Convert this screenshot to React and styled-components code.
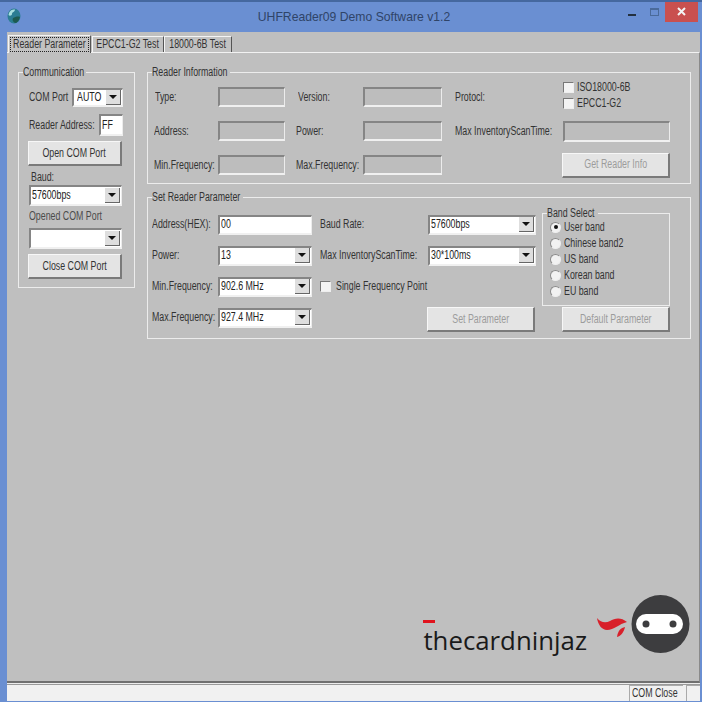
import React from 'react';
import styled, { createGlobalStyle } from 'styled-components';

const GlobalStyle = createGlobalStyle`
  html, body {
    margin: 0;
    padding: 0;
    background: #fff;
  }
  * {
    box-sizing: border-box;
  }
`;

const Window = styled.div`
  width: 702px;
  height: 702px;
  position: relative;
  display: flex;
  flex-direction: column;
  background: #6a8fd2;
  padding: 0 2px 1px 7px;
  border-top: 2px solid #45689f;
  font-family: "Liberation Sans", Arial, sans-serif;
  font-size: 12px;
  color: #333;
  overflow: hidden;
`;

const TitleBar = styled.div`
  height: 30px;
  position: relative;
  display: flex;
  align-items: center;
  justify-content: center;
  flex: none;
  font-size: 12.2px;
  color: #2f4468;
  margin: 0 -2px 0 -7px;
  padding-left: 6px;
`;

const AppIcon = styled.svg`
  position: absolute;
  left: 7px;
  top: 6px;
  width: 14px;
  height: 16px;
`;

const WinButtons = styled.div`
  position: absolute;
  right: 4px;
  top: -1px;
  display: flex;
  align-items: flex-start;
`;

const WinButton = styled.div`
  width: ${(p) => p.$w}px;
  height: 21px;
  display: flex;
  align-items: center;
  justify-content: center;
  background: ${(p) => p.$bg || 'transparent'};
`;

const Client = styled.div`
  flex: 1;
  min-height: 0;
  display: flex;
  flex-direction: column;
  background: #ededed;
`;

/* the old dialog font is much narrower than Arial, so squeeze the text */
const Text = styled.span`
  display: inline-block;
  flex: none;
  white-space: nowrap;
  line-height: 13px;
  transform: scaleX(0.735);
  transform-origin: ${(p) => (p.$center ? 'center' : 'left')} center;
  margin-left: ${(p) => p.$indent || 0}px;
  color: ${(p) => p.$color || 'inherit'};
`;

const RowLabel = styled(Text)`
  flex: 1;
  width: 0;
`;

const TabStrip = styled.div`
  height: 20px;
  flex: none;
  display: flex;
  align-items: flex-end;
  padding-left: 1px;
  background: #bfbfbf;
`;

const Tab = styled.div`
  height: ${(p) => (p.$active ? 18 : 16)}px;
  width: ${(p) => p.$w}px;
  flex: none;
  display: flex;
  align-items: center;
  justify-content: center;
  background: #c2c2c2;
  border-top: 1px solid #f4f4f4;
  border-left: 1px solid #f4f4f4;
  border-right: 1px solid #555;
  margin-bottom: ${(p) => (p.$active ? -1 : 0)}px;
  margin-right: ${(p) => (p.$active ? 1 : 0)}px;
  position: relative;
  z-index: ${(p) => (p.$active ? 1 : 0)};
`;

const TabFocus = styled.div`
  width: 79px;
  height: 15px;
  display: flex;
  align-items: center;
  justify-content: center;
  border: 1px dotted #222;
`;

const TabPanel = styled.div`
  flex: 1;
  min-height: 0;
  display: grid;
  grid-template-columns: 117px 544px;
  grid-template-rows: 117px 147px;
  column-gap: 12px;
  row-gap: 8px;
  align-content: start;
  padding: 14px 0 0 11px;
  background: #bfbfbf;
  border-top: 1px solid #f2f2f2;
  border-right: 1px solid #8a8a8a;
  border-bottom: 2px solid #707070;
`;

const Group = styled.fieldset`
  margin: 0;
  min-width: 0;
  border: 1px solid #ececec;
  padding: 0;
  display: block;
`;

const CommGroup = styled(Group)`
  grid-row: 1 / 3;
  align-self: start;
  height: 221px;
`;

const Legend = styled.legend`
  padding: 0;
  margin-left: 4px;
  width: ${(p) => p.$w}px;
  height: 10px;
  display: flex;
  align-items: center;
  background: #bfbfbf;
  color: #333;
`;

const CommBody = styled.div`
  display: flex;
  flex-direction: column;
  padding: 11px 11px 0 10px;
`;

const CommRow = styled.div`
  display: flex;
  align-items: center;
  justify-content: space-between;
  margin-bottom: ${(p) => p.$mb || 0}px;
`;

const Field = styled.div`
  width: ${(p) => p.$w}px;
  height: ${(p) => p.$h || 20}px;
  flex: none;
  display: flex;
  align-items: center;
  justify-content: space-between;
  overflow: hidden;
  background: ${(p) => (p.$disabled ? '#bdbdbd' : '#fff')};
  border-style: solid;
  border-width: 2px 1px 2px 2px;
  border-color: #858585 #ececec #f0f0f0 #858585;
  padding: 0 1px 0 ${(p) => p.$pad || 1}px;
  color: #222;
`;

const FieldValue = styled.div`
  flex: 1;
  min-width: 0;
  display: flex;
  align-items: center;
`;

const DropArrow = styled.span`
  width: 15px;
  height: 15px;
  flex: none;
  display: flex;
  align-items: center;
  justify-content: center;
  background: #dedede;
  border-right: 1px solid #666;
  border-bottom: 1px solid #666;
  &::after {
    content: '';
    border-left: 4px solid transparent;
    border-right: 4px solid transparent;
    border-top: 4px solid #111;
  }
`;

const PushButton = styled.div`
  width: ${(p) => p.$w}px;
  height: 25px;
  flex: none;
  display: flex;
  align-items: center;
  justify-content: center;
  background: #e4e4e4;
  border-style: solid;
  border-width: 1px 2px 2px 1px;
  border-color: #f7f7f7 #7a7a7a #7a7a7a #f7f7f7;
  margin-left: ${(p) => p.$offset || 0}px;
  color: ${(p) => (p.disabled ? '#9c9c9c' : '#333')};
`;

const InfoGrid = styled.div`
  display: grid;
  grid-template-columns: 64px 67px 11px 67px 79px 13px 108px 107px;
  grid-auto-rows: 34px;
  align-items: center;
  padding: 3px 0 0 6px;
`;

const Spacer = styled.span``;

const CheckStack = styled.div`
  display: flex;
  flex-direction: column;
  gap: 1px;
  align-self: start;
`;

const CheckRow = styled.div`
  display: flex;
  align-items: center;
  gap: 3px;
  height: 15px;
`;

const CheckBox = styled.span`
  width: 11px;
  height: 11px;
  flex: none;
  background: #f3f3f3;
  border-style: solid;
  border-width: 1px;
  border-color: #777 #eee #eee #777;
`;

const InfoButton = styled.div`
  margin-left: -1px;
`;

const ParamBody = styled.div`
  display: grid;
  grid-template-columns: 172px 1fr;
`;

const ParamLeft = styled.div`
  display: grid;
  grid-template-columns: 66px 95px;
  grid-auto-rows: 31px;
  align-items: center;
  padding: 7px 0 0 4px;
`;

const ParamRight = styled.div`
  display: grid;
  grid-template-columns: 108px 108px 6px 128px;
  grid-template-rows: repeat(4, 31px);
  align-items: center;
  padding-top: 7px;
`;

const SingleCheck = styled(CheckRow)`
  grid-column: 1 / 3;
  gap: 5px;
`;

const ParamButtonCell = styled.div`
  grid-column: 2;
  grid-row: 4;
  align-self: end;
  margin-bottom: 1px;
`;

const BandCell = styled.div`
  grid-column: 4;
  grid-row: 1 / 4;
  align-self: start;
  margin-top: -1px;
`;

const DefaultCell = styled.div`
  grid-column: 4;
  grid-row: 4;
  align-self: end;
  margin: 0 0 1px 20px;
`;

const BandGroup = styled(Group)`
  height: 98px;
`;

const BandList = styled.div`
  display: flex;
  flex-direction: column;
  padding: 1px 0 0 7px;
`;

const BandRow = styled.div`
  height: 16.2px;
  display: flex;
  align-items: center;
  gap: 3px;
`;

const Radio = styled.span`
  width: 11px;
  height: 11px;
  flex: none;
  border-radius: 50%;
  background: #f2f2f2;
  border: 1px solid #8b8b8b;
  border-right-color: #eee;
  border-bottom-color: #eee;
  display: flex;
  align-items: center;
  justify-content: center;
  &::after {
    content: '';
    width: 4px;
    height: 4px;
    border-radius: 50%;
    background: ${(p) => (p.$on ? '#111' : 'transparent')};
  }
`;

const Brand = styled.div`
  display: flex;
  align-items: flex-start;
  position: absolute;
  right: 11px;
  top: 592px;
  gap: 10px;
`;

const BrandName = styled.div`
  position: relative;
  font-family: "Open Sans", "DejaVu Sans", sans-serif;
  font-size: 25.8px;
  line-height: 32px;
  color: #1a1a1a;
  margin-top: 30px;
  &::before {
    content: '';
    position: absolute;
    left: 0;
    top: -4px;
    width: 12px;
    height: 3px;
    background: #e0141e;
  }
`;

const Logo = styled.svg`
  width: 94px;
  height: 60px;
  display: block;
`;

const StatusBar = styled.div`
  height: 17px;
  flex: none;
  margin-top: 1px;
  display: flex;
  justify-content: flex-end;
  background: #f1f1f1;
  border-top: 1px solid #9a9a9a;
`;

const StatusCell = styled.div`
  width: ${(p) => p.$w}px;
  display: flex;
  align-items: center;
  padding-left: 2px;
  color: #333;
  border-left: 1px solid #aaa;
  border-top: 1px solid #aaa;
  margin-left: 3px;
`;

function Combo({ w, value, h, pad }) {
  return (
    <Field $w={w} $h={h} $pad={pad}>
      <FieldValue><Text>{value}</Text></FieldValue>
      <DropArrow />
    </Field>
  );
}

function Communication() {
  return (
    <CommGroup>
      <Legend $w={63}><Text>Communication</Text></Legend>
      <CommBody>
        <CommRow $mb={7}>
          <RowLabel>COM Port</RowLabel>
          <Combo w={51} h={19} pad={3} value="AUTO" />
        </CommRow>
        <CommRow $mb={5}>
          <RowLabel>Reader Address:</RowLabel>
          <Field $w={24} $h={22}><Text>FF</Text></Field>
        </CommRow>
        <CommRow $mb={5}>
          <PushButton $w={94} $offset={-1}><Text $center>Open COM Port</Text></PushButton>
        </CommRow>
        <CommRow $mb={1}>
          <Text $indent={2}>Baud:</Text>
        </CommRow>
        <CommRow $mb={4}>
          <Combo w={93} h={21} value="57600bps" />
        </CommRow>
        <CommRow $mb={5}>
          <Text $color="#4b4b4b">Opened COM Port</Text>
        </CommRow>
        <CommRow $mb={5}>
          <Combo w={93} h={21} value="" />
        </CommRow>
        <CommRow>
          <PushButton $w={94} $offset={-1}><Text $center>Close COM Port</Text></PushButton>
        </CommRow>
      </CommBody>
    </CommGroup>
  );
}

function ReaderInfo() {
  return (
    <Group>
      <Legend $w={78}><Text>Reader Information</Text></Legend>
      <InfoGrid>
        <Text $indent={1}>Type:</Text>
        <Field $w={67} $disabled />
        <Spacer />
        <Text $indent={2}>Version:</Text>
        <Field $w={79} $disabled />
        <Spacer />
        <Text>Protocl:</Text>
        <CheckStack>
          <CheckRow><CheckBox /><Text>ISO18000-6B</Text></CheckRow>
          <CheckRow><CheckBox /><Text>EPCC1-G2</Text></CheckRow>
        </CheckStack>

        <Text>Address:</Text>
        <Field $w={67} $disabled />
        <Spacer />
        <Text>Power:</Text>
        <Field $w={79} $disabled />
        <Spacer />
        <Text>Max InventoryScanTime:</Text>
        <Field $w={107} $h={21} $disabled />

        <Text>Min.Frequency:</Text>
        <Field $w={67} $disabled />
        <Spacer />
        <Text>Max.Frequency:</Text>
        <Field $w={79} $disabled />
        <Spacer />
        <Spacer />
        <InfoButton>
          <PushButton $w={108} disabled><Text $center>Get Reader Info</Text></PushButton>
        </InfoButton>
      </InfoGrid>
    </Group>
  );
}

function SetParameter() {
  const bands = ['User band', 'Chinese band2', 'US band', 'Korean band', 'EU band'];
  return (
    <Group>
      <Legend $w={91}><Text>Set Reader Parameter</Text></Legend>
      <ParamBody>
        <ParamLeft>
          <Text>Address(HEX):</Text>
          <Field $w={94}><Text>00</Text></Field>
          <Text>Power:</Text>
          <Combo w={94} value="13" />
          <Text>Min.Frequency:</Text>
          <Combo w={94} value="902.6 MHz" />
          <Text>Max.Frequency:</Text>
          <Combo w={94} value="927.4 MHz" />
        </ParamLeft>
        <ParamRight>
          <Text>Baud Rate:</Text>
          <Combo w={108} value="57600bps" />
          <Spacer />
          <BandCell>
            <BandGroup>
              <Legend $w={51}><Text>Band Select</Text></Legend>
              <BandList>
                {bands.map((b, i) => (
                  <BandRow key={b}>
                    <Radio $on={i === 0} />
                    <Text>{b}</Text>
                  </BandRow>
                ))}
              </BandList>
            </BandGroup>
          </BandCell>
          <Text>Max InventoryScanTime:</Text>
          <Combo w={108} value="30*100ms" />
          <SingleCheck>
            <CheckBox />
            <Text>Single Frequency Point</Text>
          </SingleCheck>
          <ParamButtonCell>
            <PushButton $w={108} $offset={-1} disabled><Text $center>Set Parameter</Text></PushButton>
          </ParamButtonCell>
          <DefaultCell>
            <PushButton $w={108} disabled><Text $center>Default Parameter</Text></PushButton>
          </DefaultCell>
        </ParamRight>
      </ParamBody>
    </Group>
  );
}

export default function App() {
  return (
    <>
      <GlobalStyle />
      <Window>
        <TitleBar>
          <AppIcon viewBox="0 0 14 16">
            <ellipse cx="7" cy="8" rx="6.5" ry="7.5" fill="#2b7d93" />
            <path d="M2 5c1-3 4-4 6-3.500C8 4 5 4 5 6S2 8 1.500 7z" fill="#a8dfe0" />
            <path d="M6 10c2-1 5-2 7-1-1 4-3 6-5 6-2-1-3-3-2-5z" fill="#1d5a50" />
          </AppIcon>
          UHFReader09 Demo Software v1.2
          <WinButtons>
            <WinButton $w={22}>
              <svg width="8" height="9" viewBox="0 0 8 9"><rect x="0" y="7" width="8" height="2" fill="#23303f" /></svg>
            </WinButton>
            <WinButton $w={22}>
              <svg width="9" height="8" viewBox="0 0 9 8"><rect x="0.500" y="0.500" width="8" height="7" fill="none" stroke="#4a6a9a" /><rect x="0" y="0" width="9" height="2" fill="#4a6a9a" /></svg>
            </WinButton>
            <WinButton $w={33} $bg="#c9504f">
              <svg width="9" height="9" viewBox="0 0 9 9"><path d="M1 1l7 7M8 1l-7 7" stroke="#f4f4f4" strokeWidth="2" /></svg>
            </WinButton>
          </WinButtons>
        </TitleBar>
        <Client>
          <TabStrip>
            <Tab $active $w={83}><TabFocus><Text $center>Reader Parameter</Text></TabFocus></Tab>
            <Tab $w={72}><Text $center>EPCC1-G2 Test</Text></Tab>
            <Tab $w={68}><Text $center>18000-6B Test</Text></Tab>
          </TabStrip>
          <TabPanel>
            <Communication />
            <ReaderInfo />
            <SetParameter />
          </TabPanel>
          <StatusBar>
            <StatusCell $w={54}><Text>COM Close</Text></StatusCell>
            <StatusCell $w={14} />
          </StatusBar>
        </Client>
        <Brand>
          <BrandName>thecardninjaz</BrandName>
          <Logo viewBox="0 0 94 60">
            <path d="M0 24C1 31 5 36 10 36C17 36 22 30 30 28C24 23 18 24 13 27C9 29 4 29 0 24Z" fill="#d8202a" />
            <path d="M28 33C24 34 21 36 20 43C24 42 27 38 28 33Z" fill="#d8202a" />
            <circle cx="63.500" cy="30" r="29" fill="#3d3d3f" />
            <rect x="39" y="20" width="47" height="20" rx="10" fill="#fff" />
            <circle cx="49" cy="30" r="3.500" fill="#3d3d3f" />
            <circle cx="76" cy="30" r="3.500" fill="#3d3d3f" />
          </Logo>
        </Brand>
      </Window>
    </>
  );
}
